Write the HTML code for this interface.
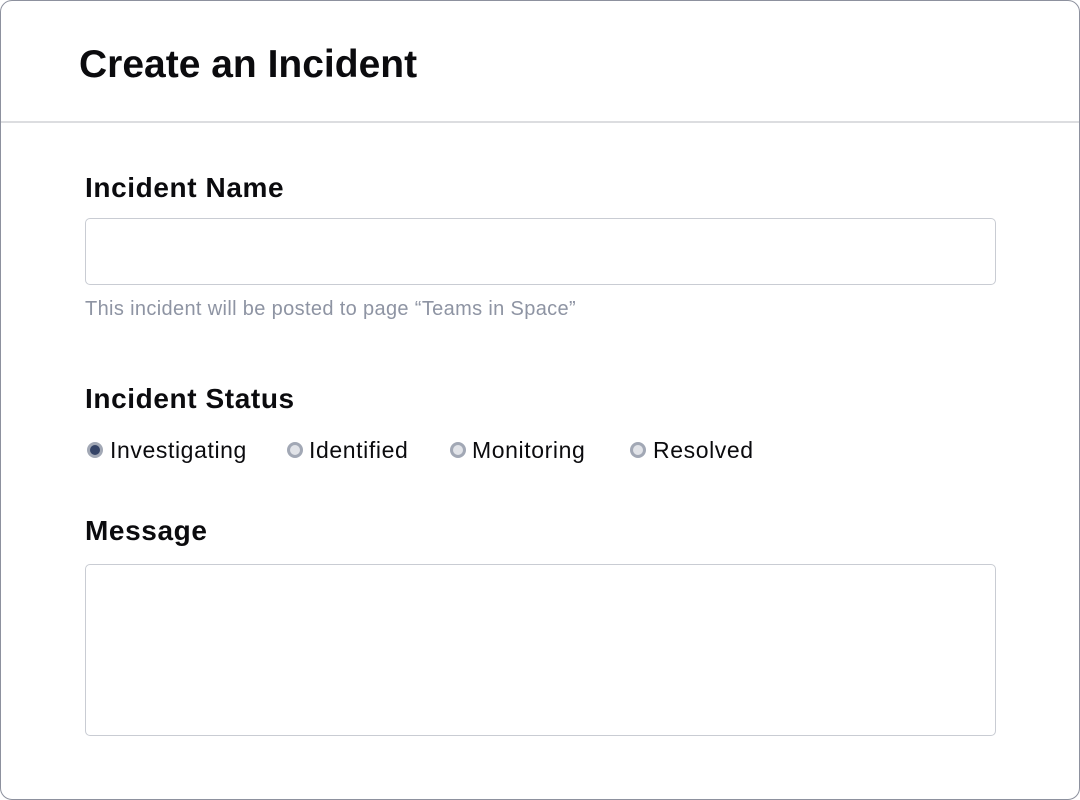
<!DOCTYPE html>
<html><head><meta charset="utf-8"><style>
html,body{margin:0;padding:0;background:#fff;}
body{width:1080px;height:800px;position:relative;overflow:hidden;font-family:"Liberation Sans",sans-serif;}
.frame{position:absolute;left:0;top:0;width:1078px;height:798px;border:1px solid #8d919e;border-radius:12px;}
.hr{position:absolute;left:1px;right:1px;top:121px;height:2px;background:#dcdde0;}
.t{position:absolute;white-space:nowrap;color:#0b0b0e;}
h1{position:absolute;left:79px;top:43px;margin:0;font-size:39px;font-weight:bold;letter-spacing:0px;color:#0b0b0e;}
.lab{font-size:28px;font-weight:bold;letter-spacing:0.6px;}
.box{position:absolute;left:85px;width:909px;border:1px solid #c9ccd3;border-radius:5px;background:#fff;}
.help{font-size:20px;letter-spacing:0.35px;color:#8e94a3;}
.r{position:absolute;top:442px;width:16px;height:16px;border-radius:50%;background:#a2a8b5;}
.r i{position:absolute;left:3px;top:3px;width:10px;height:10px;border-radius:50%;background:#e1e3e8;}
.r.on i{background:#344366;}
.rl{font-size:23px;letter-spacing:0.6px;top:437px;}
</style></head><body>
<div class="frame"></div>
<div class="hr"></div>
<h1>Create an Incident</h1>
<div class="t lab" style="left:85px;top:172px;">Incident Name</div>
<div class="box" style="top:218px;height:65px;"></div>
<div class="t help" style="left:85px;top:298px;">This incident will be posted to page “Teams in Space”</div>
<div class="t lab" style="left:85px;top:383px;">Incident Status</div>
<div class="r on" style="left:87px;"><i></i></div><div class="t rl" style="left:110px;">Investigating</div>
<div class="r" style="left:287px;"><i></i></div><div class="t rl" style="left:309px;">Identified</div>
<div class="r" style="left:450px;"><i></i></div><div class="t rl" style="left:472px;">Monitoring</div>
<div class="r" style="left:630px;"><i></i></div><div class="t rl" style="left:653px;">Resolved</div>
<div class="t lab" style="left:85px;top:515px;">Message</div>
<div class="box" style="top:564px;height:170px;"></div>
</body></html>
